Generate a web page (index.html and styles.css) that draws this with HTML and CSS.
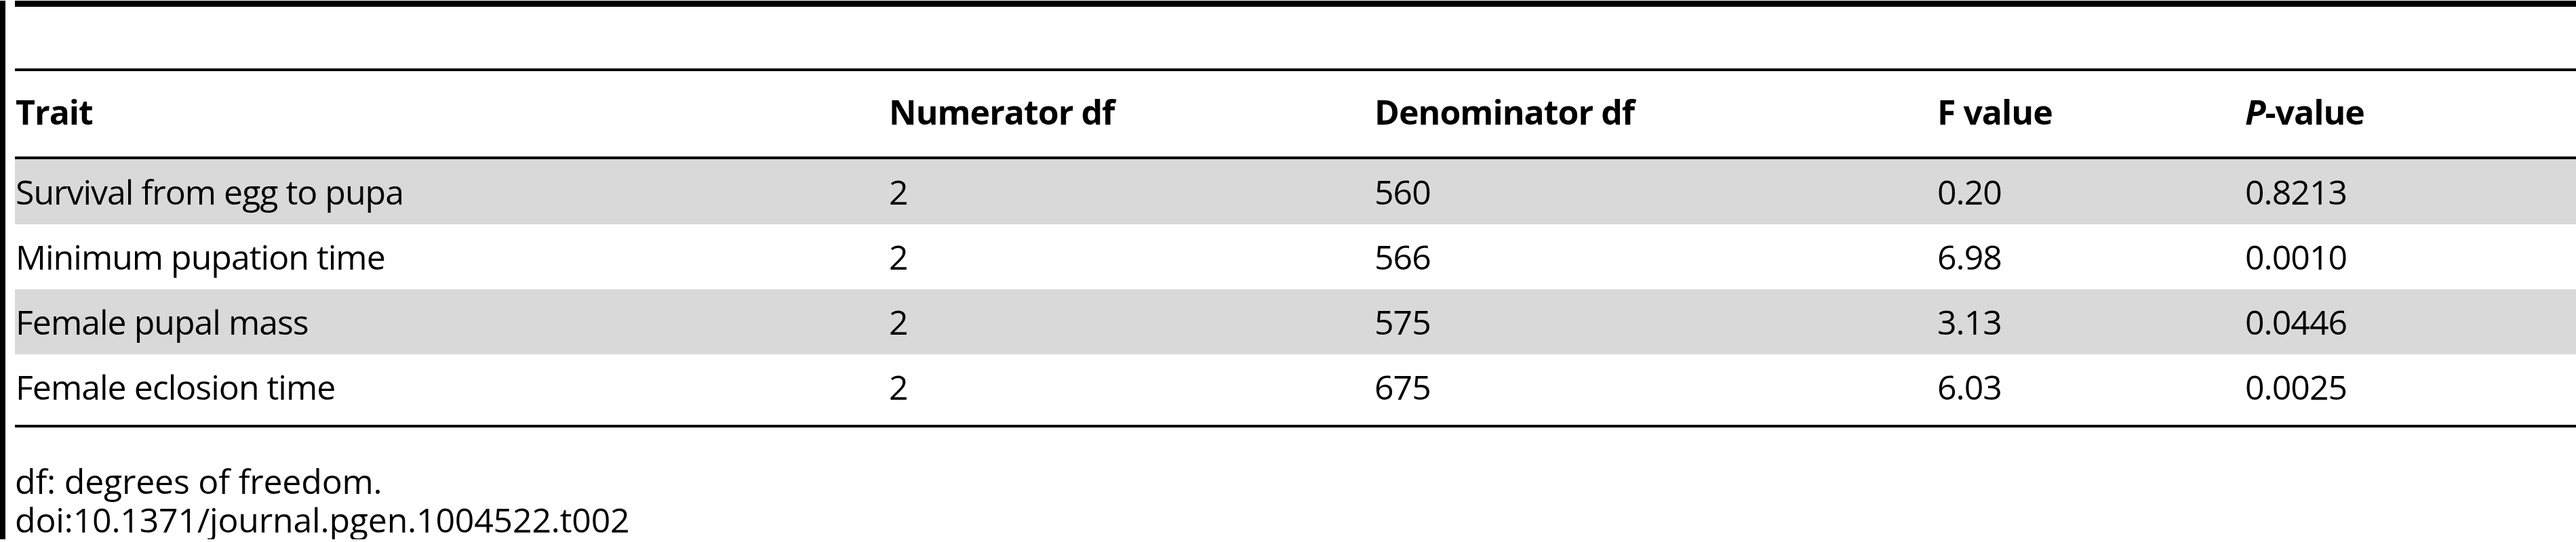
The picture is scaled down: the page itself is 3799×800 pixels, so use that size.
FILE: index.html
```html
<!DOCTYPE html>
<html>
<head>
<meta charset="utf-8">
<link rel="stylesheet" href="styles.css">
</head>
<body>
<div class="fig">
  <div class="caption"></div>
  <table class="data">
    <colgroup>
      <col class="c1"><col class="c2"><col class="c3"><col class="c4"><col class="c5">
    </colgroup>
    <thead>
      <tr>
        <th>Trait</th>
        <th>Numerator df</th>
        <th>Denominator df</th>
        <th>F value</th>
        <th><i>P</i>-value</th>
      </tr>
    </thead>
    <tbody>
      <tr class="shade">
        <td>Survival from egg to pupa</td><td>2</td><td>560</td><td>0.20</td><td>0.8213</td>
      </tr>
      <tr>
        <td>Minimum pupation time</td><td>2</td><td>566</td><td>6.98</td><td>0.0010</td>
      </tr>
      <tr class="shade">
        <td>Female pupal mass</td><td>2</td><td>575</td><td>3.13</td><td>0.0446</td>
      </tr>
      <tr class="last">
        <td>Female eclosion time</td><td>2</td><td>675</td><td>6.03</td><td>0.0025</td>
      </tr>
    </tbody>
  </table>
  <div class="notes">
    <div>df: degrees of freedom.</div>
    <div>doi:10.1371/journal.pgen.1004522.t002</div>
  </div>
</div>
</body>
</html>
```

FILE: styles.css
```css
html, body {
  margin: 0;
  padding: 0;
  background: #fff;
}

.fig {
  border-left: 8px solid #000;
  padding-left: 14px;
  font-family: "Open Sans", "Liberation Sans", sans-serif;
  font-size: 50px;
  color: #000;
}

.caption {
  margin-top: 1px;
  border-top: 9px solid #000;
  height: 91px;
}

.data {
  width: 3777px;
  table-layout: fixed;
  border-collapse: collapse;
  border-top: 4px solid #000;
  border-bottom: 4px solid #000;
}

.c1 { width: 1288px; }
.c2 { width: 716px; }
.c3 { width: 830px; }
.c4 { width: 454px; }
.c5 { width: 489px; }

.data th,
.data td {
  padding: 0 0 0 1px;
  text-align: left;
  vertical-align: middle;
  white-space: nowrap;
  line-height: 68px;
  letter-spacing: -1px;
}

.data th {
  font-weight: 700;
  height: 120px;
  padding-bottom: 6px;
}

.data thead tr {
  border-bottom: 4px solid #000;
}

.data td {
  font-weight: 400;
  height: 96px;
}

.data tr.shade td {
  background: #d9d9d9;
}

.data tr.last td {
  height: 96px;
  padding-bottom: 8px;
}

.notes {
  margin-top: 51px;
  line-height: 57px;
  letter-spacing: -0.2px;
}
```
